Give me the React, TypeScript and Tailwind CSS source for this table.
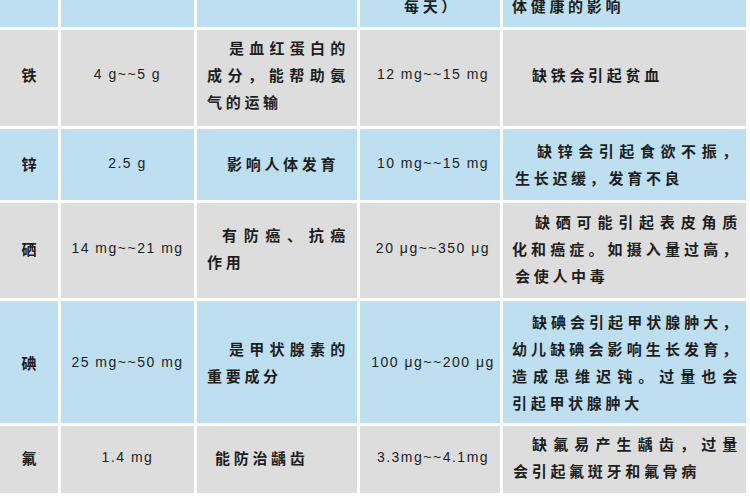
import React from "react";

type Line = { t: string; c?: string };
type Row = {
  el: string;
  dose: string;
  role: Line[];
  daily: string;
  effect: Line[];
  bg: string;
  pad: string;
};

const J = "text-justify [text-align-last:justify]";

const rows: Row[] = [
  {
    el: "铁",
    dose: "4 g~~5 g",
    role: [
      { t: "是血红蛋白的", c: `pl-[22px] ${J}` },
      { t: "成分，能帮助氨", c: J },
      { t: "气的运输" },
    ],
    daily: "12 mg~~15 mg",
    effect: [{ t: "缺铁会引起贫血", c: "pl-[20px]" }],
    bg: "bg-[#dddddd]",
    pad: "pb-[8px]",
  },
  {
    el: "锌",
    dose: "2.5 g",
    role: [{ t: "影响人体发育", c: "pl-[20px]" }],
    daily: "10 mg~~15 mg",
    effect: [
      { t: "缺锌会引起食欲不振，", c: `pl-[25px] ${J}` },
      { t: "生长迟缓，发育不良", c: "pl-[3px]" },
    ],
    bg: "bg-[#bddfef]",
    pad: "pb-[2px]",
  },
  {
    el: "硒",
    dose: "14 mg~~21 mg",
    role: [
      { t: "有防癌、抗癌", c: `pl-[15px] ${J}` },
      { t: "作用" },
    ],
    daily: "20 μg~~350 μg",
    effect: [
      { t: "缺硒可能引起表皮角质", c: `pl-[23px] ${J}` },
      { t: "化和癌症。如摄入量过高，", c: J },
      { t: "会使人中毒", c: "pl-[3px]" },
    ],
    bg: "bg-[#dddddd]",
    pad: "pb-[5px]",
  },
  {
    el: "碘",
    dose: "25 mg~~50 mg",
    role: [
      { t: "是甲状腺素的", c: `pl-[22px] ${J}` },
      { t: "重要成分" },
    ],
    daily: "100 μg~~200 μg",
    effect: [
      { t: "缺碘会引起甲状腺肿大，", c: `pl-[20px] ${J}` },
      { t: "幼儿缺碘会影响生长发育，", c: J },
      { t: "造成思维迟钝。过量也会", c: J },
      { t: "引起甲状腺肿大" },
    ],
    bg: "bg-[#bddfef]",
    pad: "pb-[0px]",
  },
  {
    el: "氟",
    dose: "1.4 mg",
    role: [{ t: "能防治龋齿", c: "pl-[8px]" }],
    daily: "3.3mg~~4.1mg",
    effect: [
      { t: "缺氟易产生龋齿，过量", c: `pl-[20px] ${J}` },
      { t: "会引起氟斑牙和氟骨病", c: "pl-[1px]" },
    ],
    bg: "bg-[#dddddd]",
    pad: "pb-[5px]",
  },
];

const cjk =
  "[font-family:'Noto_Sans_CJK_SC','Liberation_Sans',sans-serif] text-[15px] leading-[27px] tracking-[3.7px] font-semibold text-[#1e1e1e]";
const num =
  "[font-family:'Liberation_Sans','Noto_Sans_CJK_SC',sans-serif] text-[14px] tracking-[1.5px] text-[#1e1e1e] whitespace-nowrap";

export default function App() {
  return (
    <div className="w-[750px] h-[500px] bg-white overflow-hidden">
      <div className="grid w-[746px] grid-cols-[58px_133px_160px_140px_243px] grid-rows-[27px_96px_71px_95px_122px_67px] gap-[3px]">
        <div className="bg-[#bddfef]" />
        <div className="bg-[#bddfef]" />
        <div className="bg-[#bddfef]" />
        <div className={`bg-[#bddfef] overflow-hidden flex flex-col justify-end items-center pb-[8px] ${cjk}`}>
          <div className="whitespace-nowrap">摄入量（</div>
          <div className="whitespace-nowrap pl-[4px]">每天）</div>
        </div>
        <div className={`bg-[#bddfef] overflow-hidden flex flex-col justify-end pl-[9px] pb-[8px] ${cjk}`}>
          <div className="whitespace-nowrap">缺乏或过量对人</div>
          <div className="whitespace-nowrap">体健康的影响</div>
        </div>
        {rows.map((r) => (
          <React.Fragment key={r.el}>
            <div className={`${r.bg} ${r.pad} flex items-center justify-center ${cjk} tracking-normal`}>
              {r.el}
            </div>
            <div className={`${r.bg} ${r.pad} flex items-center justify-center ${num}`}>
              {r.dose}
            </div>
            <div className={`${r.bg} ${r.pad} flex flex-col justify-center pl-[10px] pr-[8px] ${cjk}`}>
              {r.role.map((l, i) => (
                <div key={i} className={`whitespace-nowrap ${l.c ?? ""}`}>
                  {l.t}
                </div>
              ))}
            </div>
            <div className={`${r.bg} ${r.pad} flex items-center justify-center pl-[6px] ${num}`}>
              {r.daily}
            </div>
            <div className={`${r.bg} ${r.pad} flex flex-col justify-center pl-[9px] pr-[5px] ${cjk}`}>
              {r.effect.map((l, i) => (
                <div key={i} className={`whitespace-nowrap ${l.c ?? ""}`}>
                  {l.t}
                </div>
              ))}
            </div>
          </React.Fragment>
        ))}
      </div>
    </div>
  );
}
